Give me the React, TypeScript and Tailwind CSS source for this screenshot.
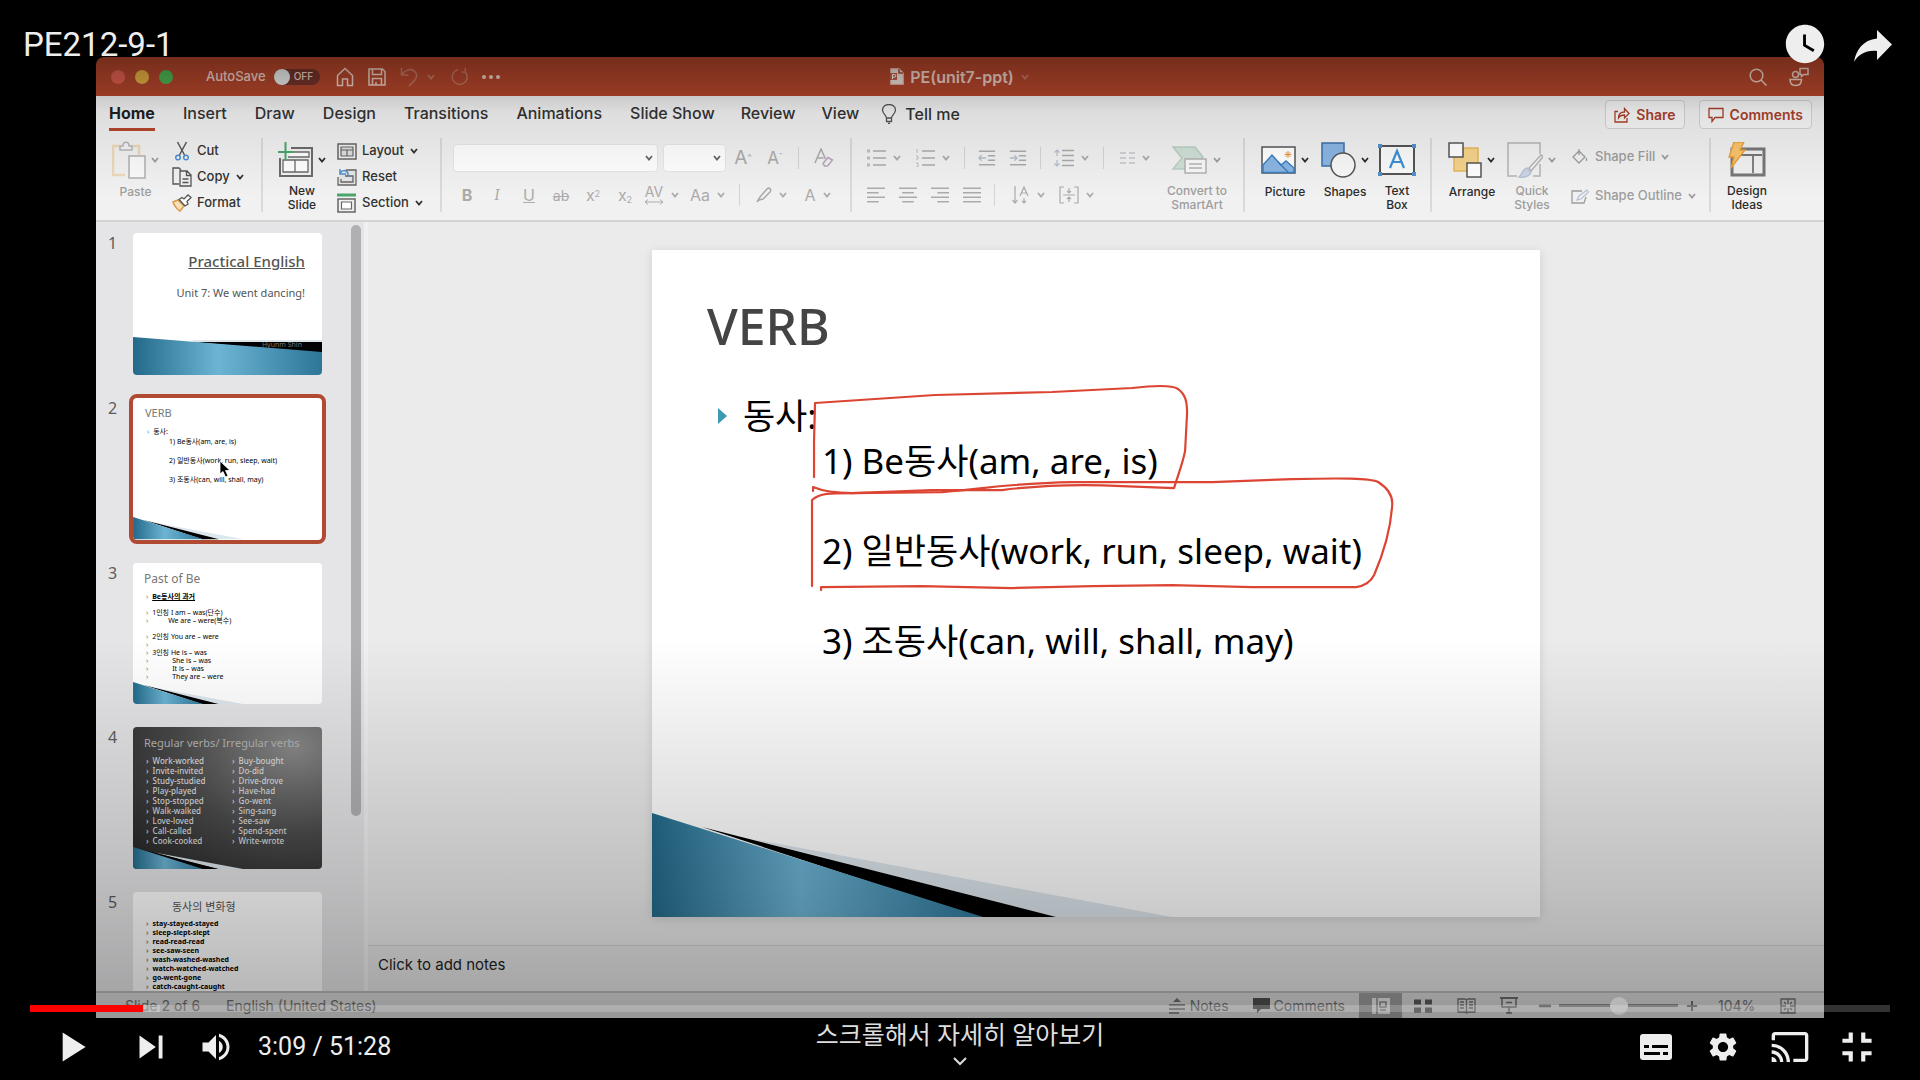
import type { ReactNode } from "react";
import {
  MdPlayArrow,
  MdSkipNext,
  MdVolumeUp,
  MdSettings,
  MdCast,
  MdFullscreenExit,
  MdWatchLater,
} from "react-icons/md";

/* ---------- small shared pieces ---------- */

function Svg({ w, h, box, className = "", children }: { w: number; h: number; box?: string; className?: string; children: ReactNode }) {
  return (
    <svg
      width={w}
      height={h}
      viewBox={box ?? `0 0 ${w} ${h}`}
      fill="none"
      stroke="currentColor"
      strokeWidth="1.5"
      className={`shrink-0 ${className}`}
      aria-hidden="true"
    >
      {children}
    </svg>
  );
}

function Chev({ className = "" }: { className?: string }) {
  return (
    <Svg w={10} h={8} className={className}>
      <path d="M2 2l3 3.5L8 2" strokeWidth="1.8" />
    </Svg>
  );
}

function Sep({ className = "" }: { className?: string }) {
  return <span className={`h-[22px] w-px shrink-0 bg-[#d4d4d4] ${className}`} />;
}

function Group({ className = "", last = false, children }: { className?: string; last?: boolean; children: ReactNode }) {
  return <div className={`flex h-[74px] shrink-0 ${last ? "" : "border-r-2 border-[#dadada]"} ${className}`}>{children}</div>;
}

function BigButton({
  icon,
  label,
  chevron = true,
  muted = false,
  className = "w-15",
}: {
  icon: ReactNode;
  label: string[];
  chevron?: boolean;
  muted?: boolean;
  className?: string;
}) {
  return (
    <button
      type="button"
      className={`flex shrink-0 flex-col items-center gap-[5px] pt-[2px] ${muted ? "text-[#9d9d9d]" : "text-[#2b2b2b]"} ${className}`}
    >
      <span className="flex h-10 items-center gap-1">
        {icon}
        {chevron && <Chev />}
      </span>
      <span className="flex flex-col text-[12px] leading-[14px] font-medium whitespace-nowrap">
        {label.map((l) => (
          <span key={l}>{l}</span>
        ))}
      </span>
    </button>
  );
}

function RowButton({ icon, label, chevron = false, muted = false }: { icon: ReactNode; label: string; chevron?: boolean; muted?: boolean }) {
  return (
    <button
      type="button"
      className={`flex h-[26px] shrink-0 items-center gap-[5px] text-[13px] font-medium whitespace-nowrap ${muted ? "text-[#9d9d9d]" : "text-[#333]"}`}
    >
      <span className="flex w-5 justify-center">{icon}</span>
      {label}
      {chevron && <Chev />}
    </button>
  );
}

function ToolButton({ name, chevron = false, className = "", children }: { name: string; chevron?: boolean; className?: string; children: ReactNode }) {
  return (
    <button type="button" aria-label={name} className={`flex h-6 shrink-0 items-center justify-center gap-[6px] text-[#ababab] ${className}`}>
      {children}
      {chevron && <Chev />}
    </button>
  );
}

function Lines({ kind }: { kind: "left" | "center" | "right" | "justify" }) {
  const d = {
    left: "M0 1.5h20M0 6.5h13M0 11.5h20M0 16.5h13",
    center: "M0 1.5h20M3.5 6.5h13M0 11.5h20M3.5 16.5h13",
    right: "M0 1.5h20M7 6.5h13M0 11.5h20M7 16.5h13",
    justify: "M0 1.5h20M0 6.5h20M0 11.5h20M0 16.5h20",
  }[kind];
  return (
    <Svg w={18} h={18} box="0 0 20 18">
      <path d={d} />
    </Svg>
  );
}

/* ---------- title bar ---------- */

function TitleBar() {
  return (
    <div className="flex h-[39px] items-center rounded-t-lg bg-[#b5462b] px-[15px] text-[#f1d3c8]">
      <div className="flex flex-1 items-center">
        <div className="flex gap-[10px]">
          <span className="size-[14px] rounded-full bg-[#e4604f]" />
          <span className="size-[14px] rounded-full bg-[#e9b243]" />
          <span className="size-[14px] rounded-full bg-[#4eb955]" />
        </div>
        <label className="ml-[33px] flex items-center gap-2 text-[13px] font-medium">
          AutoSave
          <input type="checkbox" className="sr-only" />
          <span className="flex h-4 w-[46px] items-center gap-1 rounded-full bg-[#74342a] text-[10px]">
            <span className="size-4 rounded-full bg-[#efefef]" />
            OFF
          </span>
        </label>
        <div className="ml-4 flex items-center gap-[14px]">
          <button type="button" aria-label="Home">
            <Svg w={18} h={20}>
              <path d="M1.5 8.5L9 1.5l7.500 7V18.500h-5V12h-5v6.500h-5z" />
            </Svg>
          </button>
          <button type="button" aria-label="Save">
            <Svg w={18} h={18}>
              <path d="M1 1h13.500L17 3.500V17H1zM4.500 1v5.500h9V1M4.500 17v-6.500h9V17M8 14v3" />
            </Svg>
          </button>
          <button type="button" aria-label="Undo" className="flex items-center gap-2 text-[#c97a66]">
            <Svg w={18} h={20}>
              <path d="M1.500 1v7h7M1.500 8C5 3 10 1.500 13.500 3.500c4 2.500 4 7 1 10L9 19" />
            </Svg>
            <Chev />
          </button>
          <button type="button" aria-label="Redo" className="text-[#c97a66]">
            <Svg w={18} h={18} box="0 0 20 20">
              <path d="M16 3.500A8.300 8.300 0 1 1 9 1.800M17 0v4.500h-4.500" />
            </Svg>
          </button>
          <button type="button" aria-label="More" className="flex gap-[3px]">
            <span className="size-1 rounded-full bg-[#f1d3c8]" />
            <span className="size-1 rounded-full bg-[#f1d3c8]" />
            <span className="size-1 rounded-full bg-[#f1d3c8]" />
          </button>
        </div>
      </div>
      <div className="flex items-center gap-[6px] text-[16px] font-semibold">
        <Svg w={14} h={17}>
          <path d="M1 1h8l4 4v11H1z" fill="#f1e4df" />
          <path d="M9 1v4h4" stroke="#b5462b" />
          <path d="M0 5h7v7H0z" fill="#c5604a" stroke="none" />
          <path d="M2.500 11V6.500h2a1.300 1.300 0 0 1 0 2.600h-2" stroke="#fff" strokeWidth="1" />
        </Svg>
        <span>PE(unit7-ppt)</span>
        <Chev className="text-[#c97a66]" />
      </div>
      <div className="flex flex-1 justify-end gap-[22px]">
        <button type="button" aria-label="Search">
          <Svg w={18} h={18}>
            <circle cx="7.500" cy="7.500" r="6.300" />
            <path d="M12 12l5.500 5.500" />
          </Svg>
        </button>
        <button type="button" aria-label="Collaborators">
          <Svg w={20} h={20}>
            <circle cx="6.500" cy="7.500" r="3" />
            <path d="M1 12.500h11.500c0 4-2.500 6-5.800 6S1 16.500 1 12.500zM11 1.500h8v6h-4l-2.500 2V7.500H11z" />
          </Svg>
        </button>
      </div>
    </div>
  );
}

/* ---------- ribbon ---------- */

const TABS: [string, string][] = [
  ["Insert", "ml-[28px]"],
  ["Draw", "ml-[28px]"],
  ["Design", "ml-[28px]"],
  ["Transitions", "ml-[28px]"],
  ["Animations", "ml-[28px]"],
  ["Slide Show", "ml-[28px]"],
  ["Review", "ml-[26px]"],
  ["View", "ml-[26px]"],
];

function TabRow() {
  return (
    <div className="flex h-[35px] justify-between pr-3 pl-[13px] text-[16px] font-medium text-[#333]">
      <div className="flex">
        <button type="button" className="flex flex-col justify-between pt-[7px] font-bold text-[#1f1f1f]">
          <span className="leading-5">Home</span>
          <span className="h-[3px] w-full bg-[#b5462b]" />
        </button>
        {TABS.map(([t, gap]) => (
          <button key={t} type="button" className={`pt-[7px] pb-2 leading-5 whitespace-nowrap ${gap}`}>
            {t}
          </button>
        ))}
        <button type="button" className="ml-[22px] flex items-center gap-2 whitespace-nowrap">
          <Svg w={16} h={20} className="text-[#555]">
            <path d="M5.500 14c0-3-4-4-4-8a6.500 5.500 0 0 1 13 0c0 4-4 5-4 8zM5.500 14v3.500h5V14M7 19.500h2" strokeWidth="1.300" />
          </Svg>
          Tell me
        </button>
      </div>
      <div className="flex gap-[14px] pt-1 text-[14px] font-semibold text-[#a8412c]">
        <button type="button" className="flex h-[29px] items-center gap-[6px] rounded-sm border border-[#d3d3d3] bg-[#f6f6f6] px-2">
          <Svg w={16} h={16}>
            <path d="M4 4.500H1V15h12v-4M4.500 11c0-4 2-6 6-6V1.500l4.500 5-4.500 4.500V8c-3 0-4.500.500-6 3z" strokeWidth="1.300" />
          </Svg>
          Share
        </button>
        <button type="button" className="flex h-[29px] items-center gap-[6px] rounded-sm border border-[#d3d3d3] bg-[#f6f6f6] px-2">
          <Svg w={16} h={16}>
            <path d="M1 1.500h14v9H7L4 14.500v-4H1z" strokeWidth="1.300" />
          </Svg>
          Comments
        </button>
      </div>
    </div>
  );
}

function FontGroup() {
  return (
    <div className="flex flex-col">
      <div className="flex h-[40px] items-center">
        <div className="relative">
          <select aria-label="Font" className="h-7 w-[205px] appearance-none rounded-sm border border-[#e6e6e6] bg-white">
            <option></option>
          </select>
          <Chev className="pointer-events-none absolute top-[10px] right-1 text-[#666]" />
        </div>
        <div className="relative ml-[5px]">
          <select aria-label="Font size" className="h-7 w-[63px] appearance-none rounded-sm border border-[#e6e6e6] bg-white">
            <option></option>
          </select>
          <Chev className="pointer-events-none absolute top-[10px] right-1 text-[#666]" />
        </div>
        <ToolButton name="Increase font size" className="ml-px w-8">
          <span className="text-[19px] leading-6">
            A<sup className="text-[9px]">^</sup>
          </span>
        </ToolButton>
        <ToolButton name="Decrease font size" className="w-8">
          <span className="text-[17px] leading-6">
            A<sup className="text-[9px]">ˇ</sup>
          </span>
        </ToolButton>
        <Sep className="mx-[7px]" />
        <ToolButton name="Clear formatting" className="w-9">
          <Svg w={20} h={20}>
            <path d="M1 15L7 1l4.500 10M3.500 10h6" />
            <path d="M9 15.500l5-6 4.500 2.500-5 6h-3z" stroke="#bba7bd" />
          </Svg>
        </ToolButton>
      </div>
      <div className="flex h-[34px] items-center text-[16px]">
        <ToolButton name="Bold" className="w-7 font-bold">
          B
        </ToolButton>
        <ToolButton name="Italic" className="w-8 font-serif italic">
          I
        </ToolButton>
        <ToolButton name="Underline" className="w-8 underline">
          U
        </ToolButton>
        <ToolButton name="Strikethrough" className="w-8 text-[14px] line-through">
          ab
        </ToolButton>
        <ToolButton name="Superscript" className="w-8">
          <span>
            x<sup className="text-[9px]">2</sup>
          </span>
        </ToolButton>
        <ToolButton name="Subscript" className="w-8">
          <span>
            x<sub className="text-[9px]">2</sub>
          </span>
        </ToolButton>
        <ToolButton name="Character spacing" chevron className="w-[42px]">
          <span className="flex flex-col items-center text-[14px] leading-[14px]">
            AV
            <Svg w={20} h={6}>
              <path d="M1 3h18M4 .500L1 3l3 2.500M16 .500L19 3l-3 2.500" strokeWidth="1" />
            </Svg>
          </span>
        </ToolButton>
        <ToolButton name="Change case" chevron className="ml-1 w-[42px]">
          Aa
        </ToolButton>
        <Sep className="mr-3 ml-[10px]" />
        <ToolButton name="Highlight" chevron className="w-10">
          <Svg w={16} h={16}>
            <path d="M1 15l3-5L11 2c2-2 5 0 3 3L7 12l-4 1z" />
          </Svg>
        </ToolButton>
        <ToolButton name="Font colour" chevron className="ml-[6px] w-10">
          A
        </ToolButton>
      </div>
    </div>
  );
}

function ParagraphGroup() {
  return (
    <div className="flex flex-col">
      <div className="flex h-[40px] items-center gap-[13px]">
        <ToolButton name="Bullets" chevron className="w-9">
          <Svg w={20} h={18}>
            <path d="M7 2h13M7 9h13M7 16h13" />
            <path d="M1 2h3M1 9h3M1 16h3" strokeWidth="3" stroke="#b5bfcc" />
          </Svg>
        </ToolButton>
        <ToolButton name="Numbering" chevron className="w-9">
          <Svg w={20} h={18}>
            <path d="M7 2h13M7 9h13M7 16h13" />
            <path d="M2 0v4M1 7h2v3H1M1 14h2v4H1" strokeWidth="1" stroke="#b5bfcc" />
          </Svg>
        </ToolButton>
        <Sep />
        <ToolButton name="Decrease indent">
          <Svg w={18} h={18} box="0 0 20 18">
            <path d="M1 1.500h18M11 6.500h8M11 11.500h8M1 16.500h18" />
            <path d="M9 9H1M4 6L1 9l3 3" stroke="#b5bfcc" />
          </Svg>
        </ToolButton>
        <ToolButton name="Increase indent">
          <Svg w={18} h={18} box="0 0 20 18">
            <path d="M1 1.500h18M11 6.500h8M11 11.500h8M1 16.500h18" />
            <path d="M1 9h8M6 6l3 3-3 3" stroke="#b5bfcc" />
          </Svg>
        </ToolButton>
        <Sep />
        <ToolButton name="Line spacing" chevron className="w-9">
          <Svg w={20} h={18}>
            <path d="M8 1.500h12M8 6.500h12M8 11.500h12M8 16.500h12" />
            <path d="M3 1v6M.500 3.500L3 1l2.500 2.500M3 11v6M.500 14.500L3 17l2.500-2.500" strokeWidth="1.200" stroke="#b5bfcc" />
          </Svg>
        </ToolButton>
        <Sep />
        <ToolButton name="Columns" chevron className="w-9">
          <Svg w={15} h={12}>
            <path d="M0 1h6M0 6h6M0 11h6M9 1h6M9 6h6M9 11h6" stroke="#c3c3cc" />
          </Svg>
        </ToolButton>
      </div>
      <div className="flex h-[34px] items-center gap-3">
        <ToolButton name="Align left" className="w-5">
          <Lines kind="left" />
        </ToolButton>
        <ToolButton name="Align centre" className="w-5">
          <Lines kind="center" />
        </ToolButton>
        <ToolButton name="Align right" className="w-5">
          <Lines kind="right" />
        </ToolButton>
        <ToolButton name="Justify" className="w-5">
          <Lines kind="justify" />
        </ToolButton>
        <Sep className="mr-1" />
        <ToolButton name="Text direction" chevron className="w-9">
          <Svg w={18} h={18}>
            <path d="M3 0v17M.500 14L3 17l2.500-3M8 10l4-9 4 9M9.500 7h5M12 12v5M10 15l2 2 2-2" strokeWidth="1.200" />
          </Svg>
        </ToolButton>
        <ToolButton name="Align text" chevron className="w-9">
          <Svg w={20} h={18}>
            <path d="M5 1H1v16h4M15 1h4v16h-4M4 9h12M10 2v5M10 11v5M8 5l2 2 2-2M8 13l2-2 2 2" strokeWidth="1.200" />
          </Svg>
        </ToolButton>
      </div>
    </div>
  );
}

function Ribbon() {
  return (
    <div className="border-b-2 border-[#d3d3d3] bg-[#f1f1f1]">
      <TabRow />
      <div className="flex h-[89px] pt-[7px]">
        <Group className="w-[167px] pl-[3px]">
          <BigButton
            muted
            className="w-[73px]"
            label={["Paste"]}
            icon={
              <Svg w={34} h={38}>
                <path d="M7 5H1v29h12M21 5h6v9" stroke="#ecd9b8" strokeWidth="2.500" />
                <path d="M8 9V5h3c0-5 6-5 6 0h3v4z" fill="#f4f4f4" stroke="#b5b5b5" />
                <path d="M17 15h16v22H17z" fill="#fafafa" stroke="#b0b0b0" />
              </Svg>
            }
          />
          <div className="flex flex-col">
            <RowButton
              label="Cut"
              icon={
                <Svg w={14} h={20}>
                  <path d="M2.500 1l7 13M11.500 1l-7 13" stroke="#555" />
                  <circle cx="3" cy="16.500" r="2.300" stroke="#4d8fce" />
                  <circle cx="11" cy="16.500" r="2.300" stroke="#4d8fce" />
                </Svg>
              }
            />
            <RowButton
              label="Copy"
              chevron
              icon={
                <Svg w={20} h={20} className="text-[#555]">
                  <path d="M7 17H1V1h6l2 2M8 4h7l4 4v11H8zM14.500 4v4.500H19M10.500 12h6M10.500 15.500h6" strokeWidth="1.300" />
                </Svg>
              }
            />
            <RowButton
              label="Format"
              icon={
                <Svg w={20} h={18}>
                  <path d="M1 8l5-2 6 6-4 5C6 16 2 12 1 8z" fill="#f7dfb8" stroke="#dd9a45" />
                  <path d="M7 5.500l3-2 2 1.500 4-4 3 2.500-4 4 1 2.500-3 2z" fill="#fff" stroke="#555" strokeWidth="1.300" />
                </Svg>
              }
            />
          </div>
        </Group>
        <Group className="w-[179px] pl-[10px]">
          <BigButton
            className="w-[58px]"
            label={["New", "Slide"]}
            icon={
              <Svg w={35} h={36} className="text-[#6b6b6b]">
                <path d="M13 6h21v28H2V16" strokeWidth="2" />
                <path d="M13 10h18v5H10M5 18h25v12H5zM17 18v12" fill="#fff" strokeWidth="1.300" />
                <path d="M7.500 0v18M0 10h15" stroke="#4ca66a" strokeWidth="2" />
              </Svg>
            }
          />
          <div className="flex flex-col pl-[6px]">
            <RowButton
              label="Layout"
              chevron
              icon={
                <Svg w={20} h={17} className="text-[#666]">
                  <path d="M1 1h18v15H1z" />
                  <path d="M4 4h12v3H4zM4 7h6v6H4zM10 7h6v6h-6z" strokeWidth="1.200" fill="#ddd" />
                </Svg>
              }
            />
            <RowButton
              label="Reset"
              icon={
                <Svg w={20} h={18} className="text-[#666]">
                  <path d="M9 2h10v15H1V9M8 8h8v6H4v-3" fill="#e6e6e6" strokeWidth="1.300" />
                  <path d="M3 1v5h6M3 6c1-4 7-5 8 0v3" stroke="#4d8fce" />
                </Svg>
              }
            />
            <RowButton
              label="Section"
              chevron
              icon={
                <Svg w={20} h={20} className="text-[#666]">
                  <path d="M0 2h19" stroke="#4ca66a" strokeWidth="3" />
                  <path d="M1 6h17v13H1z" />
                  <path d="M4.500 9h10v7h-10z" fill="#fff" strokeWidth="1.200" />
                </Svg>
              }
            />
          </div>
        </Group>
        <Group className="w-[410px] pl-[11px]">
          <FontGroup />
        </Group>
        <Group className="w-[393px] justify-between pr-[8px] pl-[14px]">
          <ParagraphGroup />
          <BigButton
            muted
            className="w-[76px]"
            label={["Convert to", "SmartArt"]}
            icon={
              <Svg w={36} h={28}>
                <path d="M1 1h22l8 10-2 2H14v10H1l9-11z" fill="#cfe0d6" stroke="#b9cfc2" />
                <path d="M13 13h21v14H13z" fill="#f8f8f8" stroke="#b3b3b3" />
                <path d="M17 18h13M17 22h13" stroke="#b3b3b3" />
              </Svg>
            }
          />
        </Group>
        <Group className="w-[187px] pl-[10px]">
          <BigButton
            label={["Picture"]}
            icon={
              <Svg w={35} h={28} className="text-[#555]">
                <path d="M1 1h33v26H1z" fill="#fff" />
                <path d="M2 19L11 9l9 10 5-4 8 7v4.500H2z" fill="#8ab6e3" stroke="#3d7fc0" />
                <path d="M17 16l10 10" stroke="#3d7fc0" />
                <path d="M27 5v7M23.500 8.500h7M24.500 6l5 5M29.500 6l-5 5" stroke="#e89b4b" strokeWidth="1" />
              </Svg>
            }
          />
          <BigButton
            label={["Shapes"]}
            icon={
              <Svg w={35} h={36} className="text-[#555]">
                <path d="M1 1h22v23H1z" fill="#8ab6e3" stroke="#3d6fa8" />
                <circle cx="22" cy="23" r="12" fill="#f8f8f8" />
              </Svg>
            }
          />
          <BigButton
            chevron={false}
            className="w-[44px]"
            label={["Text", "Box"]}
            icon={
              <Svg w={38} h={32} className="text-[#555]">
                <path d="M2 2h34v28H2z" fill="#fafafa" strokeWidth="2" />
                <path d="M12 24l7-17 7 17M14.500 18h9" stroke="#3d8fd6" strokeWidth="2.200" />
                <path d="M0 2h4M34 2h4M0 30h4M34 30h4" strokeWidth="4" stroke="#5590cc" />
              </Svg>
            }
          />
        </Group>
        <Group className="w-[279px] pl-[10px]">
          <BigButton
            label={["Arrange"]}
            icon={
              <Svg w={34} h={36} className="text-[#555]">
                <path d="M6 6h24v23H6z" fill="#f5d38a" stroke="#e9b65c" />
                <path d="M1 1h14v14H1zM19 21h14v14H19z" fill="#fff" />
              </Svg>
            }
          />
          <BigButton
            muted
            label={["Quick", "Styles"]}
            icon={
              <Svg w={36} h={36} className="text-[#b5b5b5]">
                <path d="M33 12V1H1v33h9M26 34h7V22" />
                <path d="M34 13L22 26l2 3 11-13c1-2 0-3-1-3z" fill="#f4f4f4" />
                <path d="M12 35c3-2 3-8 8-9l4 4c-1 4-7 6-12 5z" fill="#cdd6e6" stroke="#b9c3d6" />
              </Svg>
            }
          />
          <div className="flex flex-col gap-[13px] pt-[6px] pl-2">
            <RowButton
              muted
              chevron
              label="Shape Fill"
              icon={
                <Svg w={16} h={16}>
                  <path d="M7 2l6 6-6 6-6-6zM7 6V0M14.500 9v3" strokeWidth="1.300" />
                </Svg>
              }
            />
            <RowButton
              muted
              chevron
              label="Shape Outline"
              icon={
                <Svg w={18} h={15}>
                  <path d="M11 2H1v12h12l2-6" strokeWidth="1.300" />
                  <path d="M6 11l2-4 8-6 1.500 2L10 10z" strokeWidth="1.200" stroke="#b5bfd3" />
                </Svg>
              }
            />
          </div>
        </Group>
        <Group last className="pl-[2px]">
          <BigButton
            chevron={false}
            className="w-[68px]"
            label={["Design", "Ideas"]}
            icon={
              <Svg w={38} h={36} className="text-[#777]">
                <path d="M4 7h32v26H4z" strokeWidth="3" />
                <path d="M6 13h28M25 14v17M25 13h9" strokeWidth="1.800" />
                <path d="M6 0h10l-4 8h5L3 26l3-11H1z" fill="#f9c46b" stroke="#e99d3a" strokeWidth="1.300" />
              </Svg>
            }
          />
        </Group>
      </div>
    </div>
  );
}

/* ---------- slides ---------- */

function Wedge() {
  return (
    <svg viewBox="0 0 888 104" className="absolute inset-x-0 bottom-0 w-full" aria-hidden="true">
      <defs>
        <linearGradient id="sea" x1="0" y1="0" x2="1" y2="0">
          <stop offset="0" stopColor="#236a8a" />
          <stop offset="0.450" stopColor="#6db4d4" />
          <stop offset="1" stopColor="#2d7698" />
        </linearGradient>
      </defs>
      <path d="M100 26L520 104H400z" fill="#dde7ee" />
      <path d="M50 14L404 104H325z" fill="#000" />
      <path d="M0 0L331 104H0z" fill="url(#sea)" />
    </svg>
  );
}

function Thumb({ n, selected = false, dark = false, children }: { n: number; selected?: boolean; dark?: boolean; children: ReactNode }) {
  return (
    <li className="flex items-start">
      <span className="w-[37px] shrink-0 pl-3 text-[16px] leading-5 text-[#5c5c5c]">{n}</span>
      <button
        type="button"
        aria-label={`Slide ${n}`}
        className={`relative flex aspect-[4/3] w-[189px] flex-col justify-start overflow-hidden rounded text-left text-black ${
          dark ? "bg-radial-[at_85%_15%] from-[#8a8a8a] via-[#4c4c4c] to-[#222]" : "bg-white"
        } ${selected ? "outline-[4px] outline-[#b14a33]" : ""}`}
      >
        {children}
      </button>
    </li>
  );
}

const PAST = [
  ["Be동사의 과거", "font-bold underline"],
  ["", ""],
  ["1인칭 I am – was(단수)", ""],
  ["We are – were(복수)", "pl-4"],
  ["", ""],
  ["2인칭 You are – were", ""],
  ["", ""],
  ["3인칭 He is – was", ""],
  ["She is – was", "pl-5"],
  ["It is – was", "pl-5"],
  ["They are – were", "pl-5"],
];
const REGULAR = ["Work-worked", "Invite-invited", "Study-studied", "Play-played", "Stop-stopped", "Walk-walked", "Love-loved", "Call-called", "Cook-cooked"];
const IRREGULAR = ["Buy-bought", "Do-did", "Drive-drove", "Have-had", "Go-went", "Sing-sang", "See-saw", "Spend-spent", "Write-wrote"];
const FORMS = [
  "stay-stayed-stayed",
  "sleep-slept-slept",
  "read-read-read",
  "see-saw-seen",
  "wash-washed-washed",
  "watch-watched-watched",
  "go-went-gone",
  "catch-caught-caught",
];

function SlidePanel() {
  return (
    <aside className="flex w-[272px] shrink-0 justify-between overflow-hidden border-r-4 border-[#f0f0f0] bg-[#e5e5e7] pr-[3px]">
      <ol className="flex h-0 flex-col gap-[23px] pt-[11px] font-['Noto_Sans','Noto_Sans_CJK_KR',sans-serif]">
        <Thumb n={1}>
          <span className="flex h-full w-full flex-col items-end pt-[18px] pr-[17px] text-[#555]">
            <span className="text-[15px] leading-5 font-medium underline">Practical English</span>
            <span className="pt-3 text-[11px] leading-5">Unit 7: We went dancing!</span>
          </span>
          <svg viewBox="0 0 189 38" className="absolute inset-x-0 bottom-0 w-full" aria-hidden="true">
            <path d="M60 3H189V6H60z" fill="#dfe6ea" />
            <path d="M60 5H189V17z" fill="#000" />
            <path d="M0 0L189 15V38H0z" fill="url(#sea)" />
          </svg>
          <span className="absolute right-[20px] bottom-[26px] text-[7px] leading-[8px] text-[#777]">Hyunm Shin</span>
        </Thumb>
        <Thumb n={2} selected>
          <span className="flex flex-col pt-[7px] pl-3 text-[7px] leading-[10px]">
            <span className="text-[11px] leading-4 text-[#777]">VERB</span>
            <span className="flex gap-1 pt-[6px] pl-[2px]">
              <span className="text-[#3c9ab5]">›</span>동사:
            </span>
            <span className="flex flex-col gap-[9px] pl-6">
              <span>1) Be동사(am, are, is)</span>
              <span>2) 일반동사(work, run, sleep, wait)</span>
              <span>3) 조동사(can, will, shall, may)</span>
            </span>
          </span>
          <Wedge />
          <svg viewBox="0 0 12 18" className="absolute top-[62px] left-[86px] w-3" aria-hidden="true">
            <path d="M1 1v13l3-2.500 2.500 5.500 2.500-1-2.500-5.500H11z" fill="#000" stroke="#fff" strokeWidth="0.800" />
          </svg>
        </Thumb>
        <Thumb n={3}>
          <span className="flex flex-col pt-2 pl-[11px]">
            <span className="text-[12px] leading-4 text-[#777]">Past of Be</span>
            <span className="flex flex-col pt-[6px] text-[7px] leading-[8px]">
              {PAST.map(([t, c], i) => (
                <span key={i} className="flex h-2 gap-1 pl-[2px]">
                  <span className="text-[#777]">{i === 1 || i === 4 ? "" : "›"}</span>
                  <span className={c}>{t}</span>
                </span>
              ))}
            </span>
          </span>
          <Wedge />
        </Thumb>
        <Thumb n={4} dark>
          <span className="flex flex-col pt-2 pl-[11px] text-[#ddd]">
            <span className="text-[11px] leading-4 whitespace-nowrap text-[#b5b5b5]">Regular verbs/ Irregular verbs</span>
            <span className="flex pt-[5px] text-[8px] leading-[10px] font-medium">
              <span className="flex w-[88px] flex-col">
                {REGULAR.map((t) => (
                  <span key={t} className="flex gap-1 pl-[2px]">
                    <span>›</span>
                    {t}
                  </span>
                ))}
              </span>
              <span className="flex flex-col">
                {IRREGULAR.map((t) => (
                  <span key={t} className="flex gap-1">
                    <span>›</span>
                    {t}
                  </span>
                ))}
              </span>
            </span>
          </span>
          <Wedge />
        </Thumb>
        <Thumb n={5}>
          <span className="flex flex-col pt-[7px] pl-[13px]">
            <span className="pl-[26px] text-[11px] leading-4 text-[#555]">동사의 변화형</span>
            <span className="flex flex-col pt-1 text-[7px] leading-[9px] font-bold">
              {FORMS.map((t) => (
                <span key={t} className="flex gap-1">
                  <span className="text-[#777]">›</span>
                  {t}
                </span>
              ))}
            </span>
          </span>
        </Thumb>
      </ol>
      <span className="mt-[3px] h-[591px] w-[10px] shrink-0 rounded-full bg-[#b0b0b3]" />
    </aside>
  );
}

function Slide() {
  return (
    <section className="relative aspect-[4/3] w-[61%] bg-white font-['Noto_Sans','Noto_Sans_CJK_KR',sans-serif] text-black shadow-[0_2px_10px_rgba(0,0,0,0.12)]">
      <h1 className="pt-[43px] pl-[55px] text-[50px] leading-[66px] font-medium text-[#444]">VERB</h1>
      <div className="flex items-center gap-4 pt-[37px] pl-[66px] text-[35px] leading-[40px]">
        <svg width="9" height="16" viewBox="0 0 9 16" aria-hidden="true">
          <path d="M0 0l9 8-9 8z" fill="#3c9ab5" />
        </svg>
        <p>동사:</p>
      </div>
      <ol className="flex flex-col gap-10 pl-[170px] text-[35px] leading-[50px] whitespace-nowrap">
        <li>1) Be동사(am, are, is)</li>
        <li>2) 일반동사(work, run, sleep, wait)</li>
        <li>3) 조동사(can, will, shall, may)</li>
      </ol>
      <Wedge />
      <svg viewBox="0 0 888 666" className="absolute inset-0 size-full" fill="none" stroke="#dc4433" strokeWidth="2.200" strokeLinecap="round" strokeLinejoin="round" aria-hidden="true">
        <path d="M162 227V191L163 153C210 150 250 147 283 145L400 142 480 138C505 135 520 135 526 139C533 144 535 151 535 163L533 201C530 216 525 227 522 238L470 236C430 234 390 235 350 240L280 240 200 243C180 243 168 240 161 237V241" />
        <path d="M160 336V250C168 243 178 243 200 243L290 242C330 239 360 233 420 232L560 232 640 229C690 228 718 228 726 232C737 239 741 247 740 256C738 286 728 311 722 325C718 333 712 336 704 337L600 337 520 335 440 336 360 338 270 336 169 337V340" />
      </svg>
    </section>
  );
}

/* ---------- status bar ---------- */

function StatusBar() {
  return (
    <footer className="flex h-[27px] shrink-0 items-center justify-between border-t-2 border-[#b9b9b9] bg-[#d9d9d9] pr-7 pl-[29px] text-[14px] text-[#6d6d6d]">
      <div className="flex gap-[26px]">
        <span>Slide 2 of 6</span>
        <span>English (United States)</span>
      </div>
      <div className="flex h-full items-center">
        <button type="button" className="flex items-center gap-[5px]">
          <Svg w={16} h={16}>
            <path d="M0 7h16M0 11h16M0 15h10" />
            <path d="M4 4l4-4 4 4z" fill="currentColor" stroke="none" />
          </Svg>
          Notes
        </button>
        <button type="button" className="ml-6 flex items-center gap-1">
          <Svg w={17} h={15} className="text-[#4f4f4f]">
            <path d="M0 0h17v11H8l-4 4v-4H0z" fill="currentColor" stroke="none" />
          </Svg>
          Comments
        </button>
        <button type="button" aria-label="Normal view" className="ml-[14px] flex h-full w-[43px] items-center justify-center bg-[#9c9c9c] text-[#e8e8e8]">
          <Svg w={18} h={16}>
            <path d="M0 0h18v16H0z" fill="#e8e8e8" stroke="none" />
            <path d="M5 0v16M8 4h6v5H8zM8 12h6" stroke="#888" />
          </Svg>
        </button>
        <button type="button" aria-label="Slide sorter" className="ml-[11px]">
          <Svg w={20} h={14} className="text-[#5a5a5a]">
            <path d="M1 3h7M12 3h7M1 11h7M12 11h7" strokeWidth="5" />
          </Svg>
        </button>
        <button type="button" aria-label="Reading view" className="ml-[24px]">
          <Svg w={19} h={16}>
            <path d="M1 1h7l1.500 1L11 1h7v13h-7l-1.500 1L8 14H1zM9.500 2v13M3 4h4M3 7h4M3 10h4M12 4h4M12 7h4M12 10h4" strokeWidth="1.300" />
          </Svg>
        </button>
        <button type="button" aria-label="Slide show" className="ml-[24px]">
          <Svg w={18} h={17}>
            <path d="M0 1h18" strokeWidth="2" />
            <path d="M2 1v9h14V1M6 5.500h6M9 10v6M6 16h6" />
          </Svg>
        </button>
        <button type="button" aria-label="Zoom out" className="ml-[21px]">
          <Svg w={12} h={12}>
            <path d="M0 6h12" strokeWidth="2.500" />
          </Svg>
        </button>
        <span className="relative mx-2 flex h-5 w-[119px] items-center justify-center">
          <span className="absolute inset-x-0 h-[3px] bg-[#8a8a8a]" />
          <span className="relative size-[18px] rounded-full bg-white" />
          <input type="range" aria-label="Zoom" defaultValue={50} className="absolute inset-0 w-full opacity-0" />
        </span>
        <button type="button" aria-label="Zoom in">
          <Svg w={12} h={12}>
            <path d="M1 6h10M6 1v10" strokeWidth="2" />
          </Svg>
        </button>
        <span className="ml-5 w-[39px]">104%</span>
        <button type="button" aria-label="Fit slide to window" className="ml-[23px]">
          <Svg w={16} h={16}>
            <path d="M1 1h14v14H1zM8 1v5M8 10v5M1 8h5M10 8h5M4 4l2 2M12 4l-2 2M4 12l2-2M12 12l-2-2" strokeWidth="1.300" />
          </Svg>
        </button>
      </div>
    </footer>
  );
}

/* ---------- player chrome ---------- */

function PlayerHeader() {
  return (
    <header className="absolute inset-x-0 top-0 flex items-start justify-between pt-[25px] pr-7 pl-[23px] text-[#eee]">
      <a href="#" className="text-[33px] leading-10">
        PE212-9-1
      </a>
      <div className="flex items-center gap-[26px]">
        <button type="button" aria-label="Watch later">
          <MdWatchLater size={46} className="-mt-1" />
        </button>
        <button type="button" aria-label="Share">
          <svg width="38" height="32" viewBox="0 0 38 32" fill="currentColor" aria-hidden="true">
            <path d="M23 0l15 14.500L23 30v-9C12 20 5 24 0 32 2 20 9 10 23 8.500z" />
          </svg>
        </button>
      </div>
    </header>
  );
}

function PlayerControls() {
  return (
    <div className="absolute inset-x-0 bottom-0 text-[#eee]">
      <div className="relative mx-[30px] flex h-[7px] bg-white/20">
        <span className="w-[6.1%] bg-[#f00]" />
        <span className="w-[0.9%] bg-white/25" />
        <input type="range" aria-label="Seek" defaultValue={6} className="absolute inset-0 w-full opacity-0" />
      </div>
      <div className="flex h-[68px] items-center justify-between px-[46px] pt-[2px]">
        <div className="flex flex-1 items-center">
          <button type="button" aria-label="Play">
            <MdPlayArrow size={50} />
          </button>
          <button type="button" aria-label="Next" className="ml-8">
            <MdSkipNext size={46} />
          </button>
          <button type="button" aria-label="Mute" className="ml-6">
            <MdVolumeUp size={36} />
          </button>
          <span className="ml-6 text-[25px]">3:09 / 51:28</span>
        </div>
        <button type="button" className="flex flex-col items-center gap-1 self-start pt-[5px] text-[25px] leading-[34px] text-[#ddd]">
          스크롤해서 자세히 알아보기
          <Svg w={16} h={9}>
            <path d="M2 1l6 6 6-6" strokeWidth="2" />
          </Svg>
        </button>
        <div className="flex flex-1 items-center justify-end">
          <button type="button" aria-label="Subtitles">
            <svg width="32" height="26" viewBox="0 0 32 26" aria-hidden="true">
              <rect width="32" height="26" rx="3" fill="#eee" />
              <path d="M4 12.500h5M12 12.500h16M4 19.500h16M23 19.500h5" stroke="#000" strokeWidth="3" />
            </svg>
          </button>
          <button type="button" aria-label="Settings" className="ml-[34px]">
            <MdSettings size={34} />
          </button>
          <button type="button" aria-label="Cast" className="ml-[30px]">
            <MdCast size={40} />
          </button>
          <button type="button" aria-label="Exit full screen" className="ml-[22px] -mr-2">
            <MdFullscreenExit size={50} />
          </button>
        </div>
      </div>
    </div>
  );
}

export default function App() {
  return (
    <div className="relative h-screen overflow-hidden bg-black font-['Roboto','Noto_Sans_CJK_KR',sans-serif]">
      <main className="flex h-full flex-col px-[5%] pt-[57px] pb-[62px] font-['Inter','Noto_Sans_CJK_KR',sans-serif]">
        <div className="relative flex min-h-0 flex-1 flex-col">
          <TitleBar />
          <Ribbon />
          <div className="flex min-h-0 flex-1">
            <SlidePanel />
            <div className="flex min-w-0 flex-1 flex-col bg-[#ebebec]">
              <div className="flex min-h-0 flex-1 items-center justify-center">
                <Slide />
              </div>
              <div className="h-[46px] border-t border-[#cfcfcf] bg-[#e6e6e6] px-[10px] pt-[9px] text-[15px] leading-5 text-[#1d1d1d]">
                Click to add notes
              </div>
            </div>
          </div>
          <StatusBar />
          <div className="pointer-events-none absolute inset-x-0 top-0 h-[140px] bg-linear-to-b from-black/35 via-black/8 via-40% to-transparent" />
          <div className="pointer-events-none absolute inset-x-0 bottom-0 h-[380px] bg-linear-to-t from-black/30 via-black/18 via-35% to-transparent" />
        </div>
      </main>
      <PlayerHeader />
      <PlayerControls />
    </div>
  );
}
